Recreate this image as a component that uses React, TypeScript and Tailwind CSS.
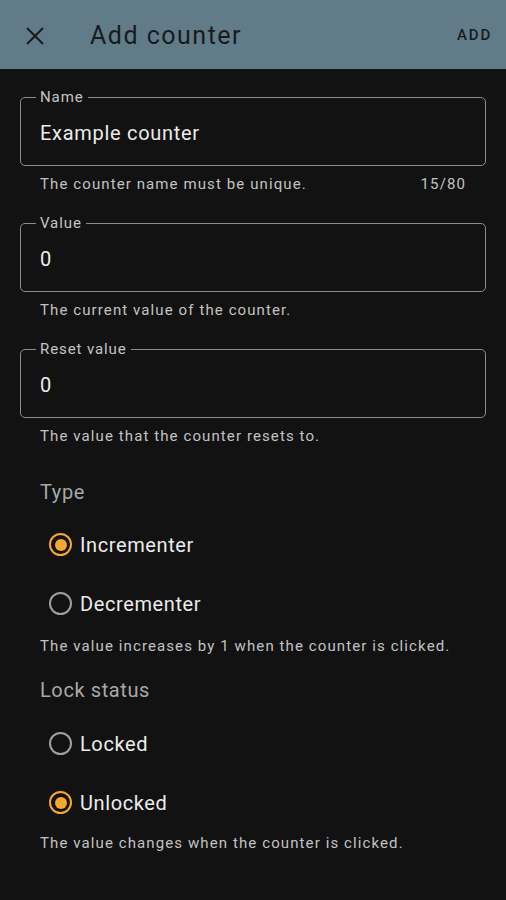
import React from "react";

function Field({ label, value, helper, counter }: { label: string; value: string; helper: string; counter?: string }) {
  return (
    <div className="mb-[30px]">
      <fieldset className="h-[77px] -mt-[8px] border border-[#8c8c8c] rounded-[5px] px-[15px] m-0 min-w-0">
        <legend className="px-[4px] text-[15px] leading-[16px] tracking-[0.9px] text-[#c4c4c4]">{label}</legend>
        <div className="pl-[4px] pt-[16px] text-[20px] leading-[24px] tracking-[0.7px] text-[#ececec]">{value}</div>
      </fieldset>
      <div className="flex justify-between pl-[20px] pr-[20px] mt-[9px] text-[15px] leading-[18px] tracking-[1.1px] text-[#c2c2c2]">
        <span>{helper}</span>
        {counter && <span>{counter}</span>}
      </div>
    </div>
  );
}

function Radio({ label, checked }: { label: string; checked?: boolean }) {
  return (
    <div className="h-[59px] flex items-center pl-[29px]">
      <span
        className={
          checked
            ? "w-[23px] h-[23px] rounded-full border-[2.5px] border-[#f7a733] flex items-center justify-center"
            : "w-[23px] h-[23px] rounded-full border-[2.5px] border-[#a0a0a0] flex items-center justify-center"
        }
      >
        {checked && <span className="w-[12px] h-[12px] rounded-full bg-[#f7a733]" />}
      </span>
      <span className="ml-[8px] text-[20px] leading-[24px] tracking-[0.6px] text-[#ececec]">{label}</span>
    </div>
  );
}

export default function App() {
  return (
    <div className="w-[506px] h-[900px] bg-[#121212] font-['Roboto',sans-serif] overflow-hidden">
      {/* toolbar */}
      <div className="h-[69px] bg-[#627b88] flex items-center px-[26px] text-[#161b1e]">
        <svg width="18" height="18" viewBox="0 0 18 18" className="shrink-0 mt-[2px]">
          <path d="M1 1L17 17M17 1L1 17" stroke="#161b1e" strokeWidth="2" />
        </svg>
        <span className="ml-[46px] mt-[3px] text-[25px] leading-[28px] tracking-[1.5px]">Add counter</span>
        <span className="ml-auto -mr-[12px] mt-[2px] text-[15px] font-medium tracking-[1.8px]">ADD</span>
      </div>

      <div className="px-5 pt-[28px]">
        <Field label="Name" value="Example counter" helper="The counter name must be unique." counter="15/80" />
        <Field label="Value" value="0" helper="The current value of the counter." />
        <Field label="Reset value" value="0" helper="The value that the counter resets to." />

        <div className="pt-[4px] pl-[20px] text-[20px] leading-[26px] tracking-[0.6px] text-[#a8a8a8]">Type</div>
        <div className="mt-[10px]">
          <Radio label="Incrementer" checked />
          <Radio label="Decrementer" />
        </div>
        <div className="mt-[4px] pl-[20px] text-[15px] leading-[18px] tracking-[1.1px] text-[#c2c2c2]">
          The value increases by 1 when the counter is clicked.
        </div>

        <div className="mt-[22px] pl-[20px] text-[20px] leading-[26px] tracking-[0.6px] text-[#a8a8a8]">Lock status</div>
        <div className="mt-[11px]">
          <Radio label="Locked" />
          <Radio label="Unlocked" checked />
        </div>
        <div className="mt-[2px] pl-[20px] text-[15px] leading-[18px] tracking-[1.1px] text-[#c2c2c2]">
          The value changes when the counter is clicked.
        </div>
      </div>
    </div>
  );
}
